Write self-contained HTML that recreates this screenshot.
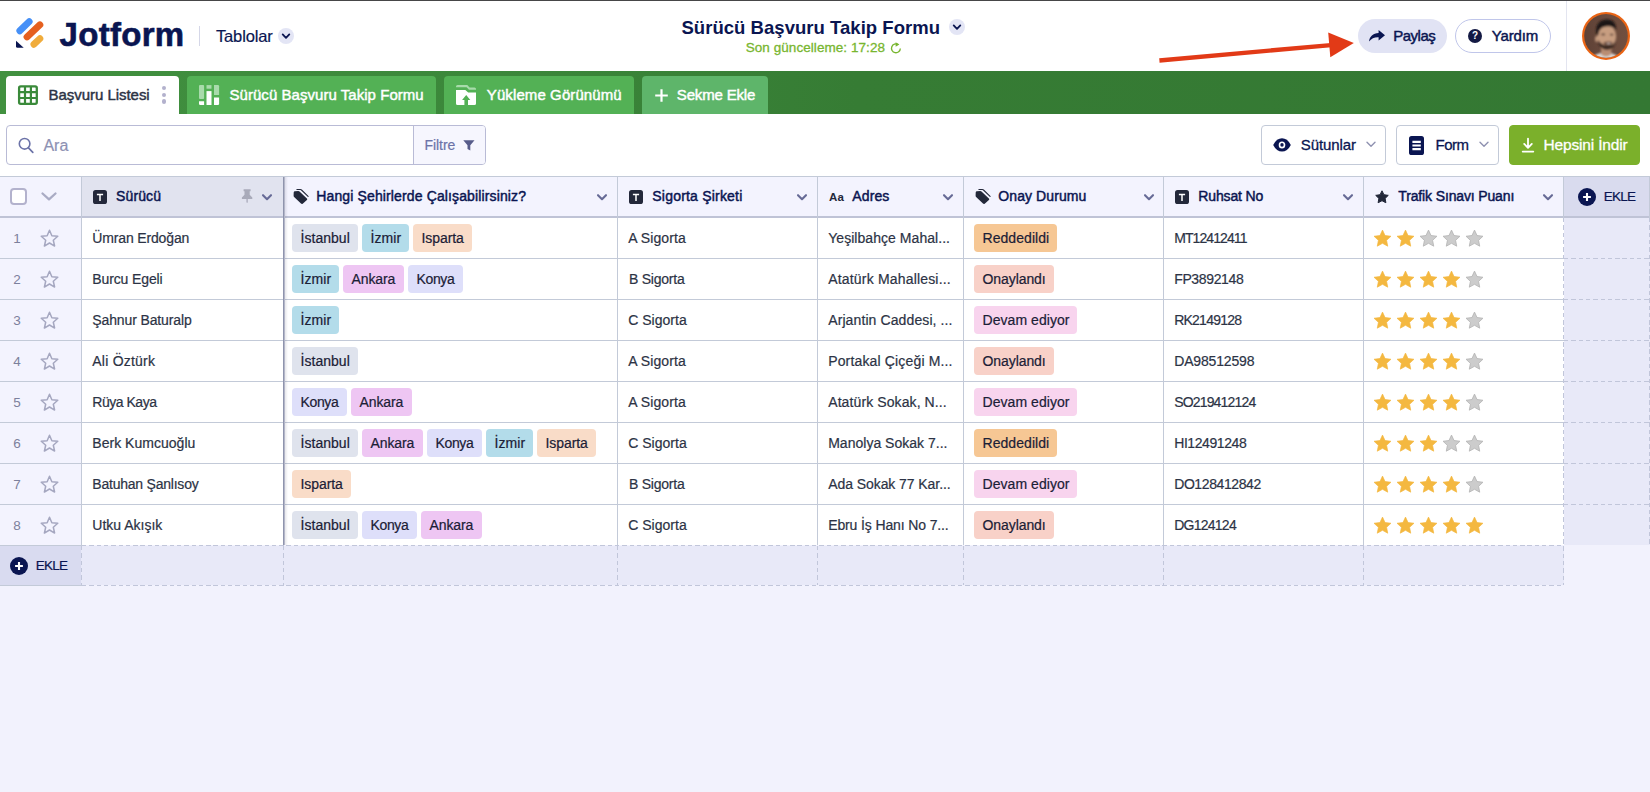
<!DOCTYPE html>
<html lang="tr">
<head>
<meta charset="utf-8">
<title>Sürücü Başvuru Takip Formu</title>
<style>
*{box-sizing:border-box;margin:0;padding:0}
html,body{width:1650px;height:792px;overflow:hidden}
body{font-family:"Liberation Sans",sans-serif;background:#f2f2fd;color:#0a1551;position:relative}
.abs{position:absolute}
svg{position:absolute;overflow:visible}
#topline{left:0;top:0;width:1650px;height:1px;background:#464648}
#header{left:0;top:1px;width:1650px;height:70px;background:#fff}
#greenbar{left:0;top:71px;width:1650px;height:43px;background:linear-gradient(90deg,#429140 0,#3b873a 30%,#367c34 52%,#347833 100%)}
#toolbar{left:0;top:114px;width:1650px;height:62px;background:#fff}
.t{position:absolute;white-space:nowrap;line-height:1}
.tab{position:absolute;top:76px;height:38px;border-radius:4px 4px 0 0;background:#53b155}
.btn{position:absolute;top:125px;height:40px;border:1px solid #c3cad8;border-radius:4px;background:#fff}
.pill{position:absolute;top:19px;height:34px;border-radius:17px}
.circ{position:absolute;width:16px;height:16px;border-radius:8px;background:#e3e5f5}
.hc{position:absolute;top:176px;height:42px;background:#f3f3fe;border-top:1px solid #c3cad8;border-bottom:2px solid #bfc3d6}
.vl{position:absolute;width:1px;background:#c3cad8}
.hl{position:absolute;height:1px;background:#c3cad8;left:0}
.hd{height:1px;background:repeating-linear-gradient(90deg,#c1c6da 0,#c1c6da 4.4px,transparent 4.4px,transparent 7.3px)}
.vd{width:1px;background:repeating-linear-gradient(180deg,#c1c6da 0,#c1c6da 4.4px,transparent 4.4px,transparent 7.3px)}
.chip{position:absolute;height:28px;border-radius:4px}
</style>
</head>
<body>
<div class="abs" id="header"></div>
<div class="abs" id="topline"></div>
<div class="abs" id="greenbar"></div>
<div class="abs" id="toolbar"></div>
<svg style="left:0;top:0" width="200" height="71" viewBox="0 0 200 71">
<line x1="19.8" y1="30.8" x2="29.2" y2="21.6" stroke="#4690f7" stroke-width="6.8" stroke-linecap="round"/>
<line x1="27.0" y1="37.0" x2="39.9" y2="24.8" stroke="#e5601f" stroke-width="6.8" stroke-linecap="round"/>
<line x1="33.9" y1="44.3" x2="39.9" y2="38.6" stroke="#f0ac3c" stroke-width="6.8" stroke-linecap="round"/>
<path d="M16 40.7 L23.7 47.7 L17.5 47.7 Q16 47.7 16 46.2 Z" fill="#0a1551"/>
</svg>
<div class="t" style="left:59.60px;top:17.50px;font-size:33px;font-weight:bold;color:#0a1551;letter-spacing:0.295px;-webkit-text-stroke:0.6px #0a1551;">Jotform</div>
<div class="abs" style="left:199px;top:26px;width:1px;height:20px;background:#d5d7e8"></div>
<div class="t" style="left:216.00px;top:28.25px;font-size:16.5px;font-weight:normal;color:#0a1551;letter-spacing:-0.155px;-webkit-text-stroke:0.2px #0a1551;">Tablolar</div>
<div class="circ" style="left:278px;top:28px"></div><svg style="left:278px;top:28px" width="16" height="16" viewBox="0 0 16 16"><path d="M4.7 6.4 L8 9.8 L11.3 6.4" fill="none" stroke="#0a1551" stroke-width="1.8" stroke-linecap="round" stroke-linejoin="round"/></svg>
<div class="t" style="left:681.50px;top:18.95px;font-size:18.5px;font-weight:bold;color:#0a1551;letter-spacing:0.033px;">Sürücü Başvuru Takip Formu</div>
<div class="circ" style="left:949px;top:19px"></div><svg style="left:949px;top:19px" width="16" height="16" viewBox="0 0 16 16"><path d="M4.7 6.4 L8 9.8 L11.3 6.4" fill="none" stroke="#0a1551" stroke-width="1.8" stroke-linecap="round" stroke-linejoin="round"/></svg>
<div class="t" style="left:745.70px;top:40.75px;font-size:13.5px;font-weight:normal;color:#78b62f;letter-spacing:0.060px;-webkit-text-stroke:0.3px #78b62f;">Son güncelleme: 17:28</div>
<svg style="left:889.5px;top:42.2px" width="12" height="12" viewBox="0 0 12 12"><path d="M8.2 2.6 A4.4 4.4 0 1 0 10.3 6.4" fill="none" stroke="#78b62f" stroke-width="1.35"/><path d="M5.6 0.3 L9.4 2.5 L5.6 4.8 Z" fill="#78b62f"/></svg>
<svg style="left:0;top:0" width="1650" height="71" viewBox="0 0 1650 71"><line x1="1159.4" y1="60.5" x2="1331" y2="45.1" stroke="#e23a17" stroke-width="4.4"/><path d="M1353.8 43 L1328.2 32.5 L1330.3 57.2 Z" fill="#e23a17"/></svg>
<div class="pill" style="left:1358px;width:89px;background:#e1e3f4"></div>
<svg style="left:1368px;top:29px" width="18" height="14" viewBox="0 0 18 14"><path d="M10.6 1 L17 6.2 L10.6 11.4 L10.6 8.3 C6.5 8.1 3.5 9.4 1 12.6 C1.6 7.6 5 4.5 10.6 4.1 Z" fill="#0a1551"/></svg>
<div class="t" style="left:1393.30px;top:28.40px;font-size:15px;font-weight:normal;color:#0a1551;letter-spacing:-0.524px;-webkit-text-stroke:0.45px #0a1551;">Paylaş</div>
<div class="pill" style="left:1455px;width:96px;background:#fff;border:1px solid #c0c6ea"></div>
<div class="abs" style="left:1467.6px;top:28.6px;width:14.6px;height:14.6px;border-radius:8px;background:#141a44"></div>
<div class="t" style="left:1472.10px;top:31.20px;font-size:10px;font-weight:bold;color:#fff;letter-spacing:-0.208px;">?</div>
<div class="t" style="left:1491.80px;top:28.40px;font-size:15px;font-weight:normal;color:#0a1551;letter-spacing:-0.147px;-webkit-text-stroke:0.45px #0a1551;">Yardım</div>
<div class="abs" style="left:1566px;top:1px;width:1px;height:70px;background:#e3e5f0"></div>
<svg style="left:1581px;top:11px" width="50" height="50" viewBox="0 0 50 50">
<defs><clipPath id="av"><circle cx="25" cy="24.9" r="21.8"/></clipPath>
<filter id="bl" x="-20%" y="-20%" width="140%" height="140%"><feGaussianBlur stdDeviation="0.95"/></filter>
<linearGradient id="avbg" x1="0" y1="0" x2="1" y2="0"><stop offset="0" stop-color="#5c4035"/><stop offset="0.5" stop-color="#6a4a3d"/><stop offset="1" stop-color="#73503f"/></linearGradient></defs>
<circle cx="25" cy="24.9" r="24" fill="#ea6414"/>
<g clip-path="url(#av)"><rect x="0" y="0" width="50" height="50" fill="url(#avbg)"/>
<g filter="url(#bl)">
<ellipse cx="24.5" cy="49" rx="14" ry="7.5" fill="#dcd8d5"/>
<path d="M20 34 L20 43.5 Q25 47.5 30 43.5 L31 34 Z" fill="#b98e73"/>
<ellipse cx="15.8" cy="28" rx="1.8" ry="3" fill="#c39a7d"/>
<ellipse cx="25.8" cy="25.6" rx="9.4" ry="11.8" fill="#c79d80"/>
<path d="M15.6 24 C13.5 13 19 8.6 26 8.4 C32 8.4 35.5 12 35 19.5 C33 16.5 30 15 26.5 15.3 C21 15.6 18 18 17.3 24 Z" fill="#1f1715"/>
<path d="M16.8 28.5 C17.5 36 22 39.2 27 38.8 C31.5 38.4 34.2 35 34.8 29 C33 33 31 34.3 27.5 34.3 C23 34.3 19.5 33 16.8 28.5 Z" fill="#3b2922"/>
<path d="M22.5 31.2 Q27.5 30 31.5 31 Q31 34.5 27.3 34.6 Q23.5 34.5 22.5 31.2 Z" fill="#5a3b30"/>
<ellipse cx="27.6" cy="32.4" rx="2.2" ry="0.7" fill="#d9c6bb"/>
<ellipse cx="22.2" cy="23.4" rx="2" ry="0.9" fill="#4a332b"/>
<ellipse cx="30.6" cy="23.6" rx="1.9" ry="0.9" fill="#4a332b"/>
</g></g></svg>
<div class="tab" style="left:6px;width:173px;background:#fff"></div>
<svg style="left:18px;top:85px" width="20" height="20" viewBox="0 0 20 20"><rect x="1.1" y="1.3" width="17.7" height="17.6" rx="1.6" fill="none" stroke="#3a8a3a" stroke-width="2.3"/><path d="M1 7.2 H19 M1 13 H19 M7 1 V19 M12.9 1 V19" stroke="#3a8a3a" stroke-width="2.2" fill="none"/></svg>
<div class="t" style="left:48.50px;top:86.50px;font-size:15px;font-weight:normal;color:#2c3345;letter-spacing:-0.036px;-webkit-text-stroke:0.45px #2c3345;">Başvuru Listesi</div>
<div class="abs" style="left:162px;top:86px;width:4.4px;height:4.4px;border-radius:2.2px;background:#b3b1cd"></div>
<div class="abs" style="left:162px;top:92.6px;width:4.4px;height:4.4px;border-radius:2.2px;background:#b3b1cd"></div>
<div class="abs" style="left:162px;top:99.2px;width:4.4px;height:4.4px;border-radius:2.2px;background:#b3b1cd"></div>
<div class="tab" style="left:187px;width:249px"></div>
<svg style="left:199px;top:85px" width="21" height="20" viewBox="0 0 21 20">
<rect x="0" y="0.1" width="5.1" height="13.9" rx="1" fill="#a8dbab"/><path d="M0 16.2 H5.1 V20 H1.2 Q0 20 0 18.8 Z" fill="#fff"/>
<rect x="7.5" y="0.1" width="5" height="3.6" fill="#a8dbab"/><rect x="7.5" y="6.1" width="5" height="13.9" fill="#fff"/>
<path d="M15 0.1 H18.9 Q20.1 0.1 20.1 1.3 V10 H15 Z" fill="#a8dbab"/><path d="M15 12.5 H20.1 V18.8 Q20.1 20 18.9 20 H15 Z" fill="#fff"/>
</svg>
<div class="t" style="left:229.50px;top:86.50px;font-size:15px;font-weight:normal;color:#fff;letter-spacing:0.042px;-webkit-text-stroke:0.45px #fff;">Sürücü Başvuru Takip Formu</div>
<div class="tab" style="left:444px;width:190px"></div>
<svg style="left:456px;top:85px" width="21" height="20" viewBox="0 0 21 20">
<path d="M0 1.6 Q0 0.1 1.5 0.1 L11.3 0.1 L13.6 2.4 L18.5 2.4 Q20 2.4 20 3.9 L20 4.8 L13 4.8 L10.6 2.3 L0 2.3 Z" fill="#a8dbab"/>
<path d="M0 5 L9.3 5 L12.2 7.6 L20 7.6 L20 18.5 Q20 20 18.5 20 L1.5 20 Q0 20 0 18.5 Z" fill="#fff"/>
<path d="M10.2 10 L14.3 14.9 L12 14.9 L12 20 L8.4 20 L8.4 14.9 L6.1 14.9 Z" fill="#53b155"/>
</svg>
<div class="t" style="left:486.80px;top:86.50px;font-size:15px;font-weight:normal;color:#fff;letter-spacing:0.100px;-webkit-text-stroke:0.45px #fff;">Yükleme Görünümü</div>
<div class="tab" style="left:642px;width:126px;background:#5eb56a"></div>
<svg style="left:654.5px;top:88.5px" width="13" height="13" viewBox="0 0 13 13"><path d="M6.5 0.2 V12.8 M0.2 6.5 H12.8" stroke="#fff" stroke-width="2.2" fill="none"/></svg>
<div class="t" style="left:676.80px;top:86.50px;font-size:15px;font-weight:normal;color:#fff;letter-spacing:-0.170px;-webkit-text-stroke:0.45px #fff;">Sekme Ekle</div>
<div class="btn" style="left:6px;width:480px;border-color:#b9bbd6"></div>
<div class="abs" style="left:413px;top:126px;width:72px;height:38px;background:#f6f6fe;border-left:1px solid #b9bbd6;border-radius:0 3px 3px 0"></div>
<svg style="left:18px;top:137px" width="16" height="17" viewBox="0 0 16 17"><circle cx="6.6" cy="6.8" r="5.3" fill="none" stroke="#6c73a8" stroke-width="1.6"/><path d="M10.5 10.9 L14.8 15.4" stroke="#6c73a8" stroke-width="1.7" stroke-linecap="round"/></svg>
<div class="t" style="left:43.50px;top:137.50px;font-size:16px;font-weight:normal;color:#8d91b3;letter-spacing:-0.049px;-webkit-text-stroke:0.2px #8d91b3;">Ara</div>
<div class="t" style="left:424.50px;top:138.00px;font-size:14px;font-weight:normal;color:#6c73a8;letter-spacing:-0.062px;-webkit-text-stroke:0.2px #6c73a8;">Filtre</div>
<svg style="left:463px;top:140px" width="12" height="11" viewBox="0 0 12 11"><path d="M0.3 0.2 L11.5 0.2 L7.3 5.3 L7.3 10.6 L4.5 9 L4.5 5.3 Z" fill="#575c8a"/></svg>
<div class="btn" style="left:1261px;width:125px"></div>
<svg style="left:1273px;top:138.1px" width="18" height="13.8" viewBox="0 0 18 13" preserveAspectRatio="none"><path d="M0.2 6.5 C2.5 2.3 5.5 0.3 9 0.3 C12.5 0.3 15.5 2.3 17.8 6.5 C15.5 10.7 12.5 12.7 9 12.7 C5.5 12.7 2.5 10.7 0.2 6.5 Z" fill="#0a1551"/><circle cx="9" cy="6.5" r="3.3" fill="#fff"/><circle cx="9" cy="6.5" r="1.7" fill="#0a1551"/></svg>
<div class="t" style="left:1300.80px;top:137.10px;font-size:15px;font-weight:normal;color:#0a1551;letter-spacing:-0.096px;-webkit-text-stroke:0.3px #0a1551;">Sütunlar</div>
<svg style="left:1365.5px;top:141.3px" width="10" height="7" viewBox="0 0 10 7"><path d="M1 1.2 L5 5.2 L9 1.2" fill="none" stroke="#8e91b0" stroke-width="1.4" stroke-linecap="round" stroke-linejoin="round"/></svg>
<div class="btn" style="left:1396px;width:103px"></div>
<svg style="left:1409px;top:135.5px" width="15" height="19" viewBox="0 0 15 19"><rect x="0" y="0" width="15" height="19" rx="2.6" fill="#0a1551"/><path d="M3.4 5.8 H11.8 M3.4 9.5 H11.8 M3.4 13.2 H11.8" stroke="#fff" stroke-width="2.2"/></svg>
<div class="t" style="left:1435.50px;top:137.10px;font-size:15px;font-weight:normal;color:#0a1551;letter-spacing:-0.498px;-webkit-text-stroke:0.3px #0a1551;">Form</div>
<svg style="left:1479px;top:141.3px" width="10" height="7" viewBox="0 0 10 7"><path d="M1 1.2 L5 5.2 L9 1.2" fill="none" stroke="#8e91b0" stroke-width="1.4" stroke-linecap="round" stroke-linejoin="round"/></svg>
<div class="btn" style="left:1509px;width:131px;background:#7bb02b;border-color:#7bb02b"></div>
<svg style="left:1521.9px;top:138px" width="12" height="15" viewBox="0 0 12 15"><path d="M6 0.6 V9.4 M2.2 5.9 L6 9.8 L9.8 5.9 M0.7 13.6 H11.3" stroke="#fff" stroke-width="1.8" fill="none" stroke-linecap="round" stroke-linejoin="round"/></svg>
<div class="t" style="left:1543.50px;top:136.85px;font-size:15.5px;font-weight:normal;color:#fff;letter-spacing:-0.162px;-webkit-text-stroke:0.3px #fff;">Hepsini İndir</div>
<div class="hc" style="left:0;width:1650px"></div>
<div class="abs" style="left:82px;top:177px;width:201px;height:39px;background:#e1e3ef"></div>
<div class="abs" style="left:1564px;top:177px;width:86px;height:39px;background:#d9dbee"></div>
<div class="abs" style="left:0;top:218px;width:81px;height:327px;background:#f3f3fe"></div>
<div class="abs" style="left:82px;top:218px;width:1482px;height:327px;background:#fff"></div>
<div class="abs" style="left:1564px;top:218px;width:86px;height:327px;background:#e8e9f8"></div>
<div class="abs" style="left:0;top:546px;width:81px;height:39px;background:#d9dbf0"></div>
<div class="abs" style="left:81px;top:546px;width:1483px;height:39px;background:#e8e9f8"></div>
<div class="hl" style="top:258px;width:1564px"></div>
<div class="abs hd" style="left:1564px;top:258px;width:86px"></div>
<div class="hl" style="top:299px;width:1564px"></div>
<div class="abs hd" style="left:1564px;top:299px;width:86px"></div>
<div class="hl" style="top:340px;width:1564px"></div>
<div class="abs hd" style="left:1564px;top:340px;width:86px"></div>
<div class="hl" style="top:381px;width:1564px"></div>
<div class="abs hd" style="left:1564px;top:381px;width:86px"></div>
<div class="hl" style="top:422px;width:1564px"></div>
<div class="abs hd" style="left:1564px;top:422px;width:86px"></div>
<div class="hl" style="top:463px;width:1564px"></div>
<div class="abs hd" style="left:1564px;top:463px;width:86px"></div>
<div class="hl" style="top:504px;width:1564px"></div>
<div class="abs hd" style="left:1564px;top:504px;width:86px"></div>
<div class="abs hd" style="left:82px;top:545px;width:1482px"></div>
<div class="hl" style="top:545px;width:82px"></div>
<div class="abs hd" style="left:82px;top:585px;width:1482px"></div>
<div class="hl" style="top:585px;width:82px"></div>
<div class="vl" style="left:81px;top:177px;height:368px"></div>
<div class="abs vd" style="left:81px;top:546px;height:39px"></div>
<div class="vl" style="left:617px;top:177px;height:368px"></div>
<div class="abs vd" style="left:617px;top:546px;height:39px"></div>
<div class="vl" style="left:817px;top:177px;height:368px"></div>
<div class="abs vd" style="left:817px;top:546px;height:39px"></div>
<div class="vl" style="left:963px;top:177px;height:368px"></div>
<div class="abs vd" style="left:963px;top:546px;height:39px"></div>
<div class="vl" style="left:1163px;top:177px;height:368px"></div>
<div class="abs vd" style="left:1163px;top:546px;height:39px"></div>
<div class="vl" style="left:1363px;top:177px;height:368px"></div>
<div class="abs vd" style="left:1363px;top:546px;height:39px"></div>
<div class="abs" style="left:283px;top:177px;width:1px;height:368px;background:#8f94ad"></div>
<div class="abs" style="left:284px;top:177px;width:1px;height:368px;background:#b4b7c9"></div>
<div class="abs" style="left:285px;top:177px;width:3px;height:368px;background:linear-gradient(90deg,rgba(20,20,60,0.10),rgba(20,20,60,0))"></div>
<div class="abs vd" style="left:283px;top:546px;height:39px"></div>
<div class="vl" style="left:1563px;top:177px;height:41px"></div>
<div class="vl" style="left:1649px;top:177px;height:41px"></div>
<div class="abs vd" style="left:1649px;top:218px;height:327px"></div>
<div class="abs vd" style="left:1563px;top:218px;height:367px"></div>
<div class="abs" style="left:10px;top:188px;width:17px;height:17px;border:2px solid #b3b2cd;border-radius:4px;background:#fff"></div>
<svg style="left:41px;top:192px" width="16" height="9" viewBox="0 0 16 9"><path d="M1.5 1.5 L8 7.3 L14.5 1.5" fill="none" stroke="#a9abc4" stroke-width="2.3" stroke-linecap="round" stroke-linejoin="round"/></svg>
<svg style="left:93px;top:190px" width="14" height="14" viewBox="0 0 14 14"><rect width="14" height="14" rx="2.6" fill="#23283a"/><path d="M3.9 3.7 H10.1 V5.2 H7.75 V11 H6.25 V5.2 H3.9 Z" fill="#fff"/></svg>
<div class="t" style="left:116.00px;top:189.10px;font-size:14px;font-weight:normal;color:#0a1551;letter-spacing:0.128px;-webkit-text-stroke:0.45px #0a1551;">Sürücü</div>
<svg style="left:241px;top:189px" width="12" height="14" viewBox="0 0 12 14"><path d="M2.6 0.2 H9.6 V2.2 H8.7 V5.8 L11.3 8.4 V9.9 H6.75 V13.3 L6.1 14 L5.45 13.3 V9.9 H0.9 V8.4 L3.5 5.8 V2.2 H2.6 Z" fill="#a9abba"/></svg>
<svg style="left:262px;top:193.7px" width="10" height="7" viewBox="0 0 10 7"><path d="M1 1.2 L5 5.2 L9 1.2" fill="none" stroke="#666a96" stroke-width="2.1" stroke-linecap="round" stroke-linejoin="round"/></svg>
<svg style="left:292.7px;top:189px" width="16" height="16" viewBox="0 0 16 16"><path d="M1.9 2.3 L5.3 2 Q6 2 6.5 2.5 L13.9 9.4 Q14.7 10.2 13.9 11 L9.7 14.7 Q8.8 15.4 8 14.6 L1.1 8 Q0.6 7.5 0.6 6.8 L0.7 3.5 Q0.8 2.4 1.9 2.3 Z" fill="#23283a"/><path d="M3.9 0.55 L7.4 0.55 Q8 0.55 8.5 1 L15.1 7.3" fill="none" stroke="#23283a" stroke-width="1.1" stroke-linecap="round"/></svg>
<div class="t" style="left:316.30px;top:189.10px;font-size:14px;font-weight:normal;color:#0a1551;letter-spacing:0.129px;-webkit-text-stroke:0.45px #0a1551;">Hangi Şehirlerde Çalışabilirsiniz?</div>
<svg style="left:597px;top:193.7px" width="10" height="7" viewBox="0 0 10 7"><path d="M1 1.2 L5 5.2 L9 1.2" fill="none" stroke="#666a96" stroke-width="2.1" stroke-linecap="round" stroke-linejoin="round"/></svg>
<svg style="left:629px;top:190px" width="14" height="14" viewBox="0 0 14 14"><rect width="14" height="14" rx="2.6" fill="#23283a"/><path d="M3.9 3.7 H10.1 V5.2 H7.75 V11 H6.25 V5.2 H3.9 Z" fill="#fff"/></svg>
<div class="t" style="left:652.30px;top:189.10px;font-size:14px;font-weight:normal;color:#0a1551;letter-spacing:0.204px;-webkit-text-stroke:0.45px #0a1551;">Sigorta Şirketi</div>
<svg style="left:797px;top:193.7px" width="10" height="7" viewBox="0 0 10 7"><path d="M1 1.2 L5 5.2 L9 1.2" fill="none" stroke="#666a96" stroke-width="2.1" stroke-linecap="round" stroke-linejoin="round"/></svg>
<div class="t" style="left:829.10px;top:191.65px;font-size:11.5px;font-weight:bold;color:#23283a;letter-spacing:0.100px;">Aa</div>
<div class="t" style="left:852.30px;top:189.10px;font-size:14px;font-weight:normal;color:#0a1551;letter-spacing:0.107px;-webkit-text-stroke:0.45px #0a1551;">Adres</div>
<svg style="left:943px;top:193.7px" width="10" height="7" viewBox="0 0 10 7"><path d="M1 1.2 L5 5.2 L9 1.2" fill="none" stroke="#666a96" stroke-width="2.1" stroke-linecap="round" stroke-linejoin="round"/></svg>
<svg style="left:974.7px;top:189px" width="16" height="16" viewBox="0 0 16 16"><path d="M1.9 2.3 L5.3 2 Q6 2 6.5 2.5 L13.9 9.4 Q14.7 10.2 13.9 11 L9.7 14.7 Q8.8 15.4 8 14.6 L1.1 8 Q0.6 7.5 0.6 6.8 L0.7 3.5 Q0.8 2.4 1.9 2.3 Z" fill="#23283a"/><path d="M3.9 0.55 L7.4 0.55 Q8 0.55 8.5 1 L15.1 7.3" fill="none" stroke="#23283a" stroke-width="1.1" stroke-linecap="round"/></svg>
<div class="t" style="left:998.30px;top:189.10px;font-size:14px;font-weight:normal;color:#0a1551;letter-spacing:0.086px;-webkit-text-stroke:0.45px #0a1551;">Onay Durumu</div>
<svg style="left:1143.5px;top:193.7px" width="10" height="7" viewBox="0 0 10 7"><path d="M1 1.2 L5 5.2 L9 1.2" fill="none" stroke="#666a96" stroke-width="2.1" stroke-linecap="round" stroke-linejoin="round"/></svg>
<svg style="left:1175px;top:190px" width="14" height="14" viewBox="0 0 14 14"><rect width="14" height="14" rx="2.6" fill="#23283a"/><path d="M3.9 3.7 H10.1 V5.2 H7.75 V11 H6.25 V5.2 H3.9 Z" fill="#fff"/></svg>
<div class="t" style="left:1198.30px;top:189.10px;font-size:14px;font-weight:normal;color:#0a1551;letter-spacing:-0.143px;-webkit-text-stroke:0.45px #0a1551;">Ruhsat No</div>
<svg style="left:1343px;top:193.7px" width="10" height="7" viewBox="0 0 10 7"><path d="M1 1.2 L5 5.2 L9 1.2" fill="none" stroke="#666a96" stroke-width="2.1" stroke-linecap="round" stroke-linejoin="round"/></svg>
<svg style="left:1375px;top:189.5px" width="14" height="14" viewBox="0 0 14 14"><path d="M7.00 0.80 L8.94 4.73 L13.28 5.36 L10.14 8.42 L10.88 12.74 L7.00 10.70 L3.12 12.74 L3.86 8.42 L0.72 5.36 L5.06 4.73 Z" fill="#23283a" stroke="#23283a" stroke-width="1" stroke-linejoin="round"/></svg>
<div class="t" style="left:1398.30px;top:189.10px;font-size:14px;font-weight:normal;color:#0a1551;letter-spacing:-0.141px;-webkit-text-stroke:0.45px #0a1551;">Trafik Sınavı Puanı</div>
<svg style="left:1543px;top:193.7px" width="10" height="7" viewBox="0 0 10 7"><path d="M1 1.2 L5 5.2 L9 1.2" fill="none" stroke="#666a96" stroke-width="2.1" stroke-linecap="round" stroke-linejoin="round"/></svg>
<svg style="left:1577.7px;top:187.7px" width="18" height="18" viewBox="0 0 18 18"><circle cx="9" cy="9" r="9" fill="#0a1551"/><path d="M9 5.1 V12.9 M5.1 9 H12.9" stroke="#fff" stroke-width="2.1"/></svg>
<div class="t" style="left:1603.80px;top:190.05px;font-size:13.5px;font-weight:normal;color:#0a1551;letter-spacing:-0.774px;-webkit-text-stroke:0.2px #0a1551;">EKLE</div>
<svg style="left:10px;top:556.8px" width="18" height="18" viewBox="0 0 18 18"><circle cx="9" cy="9" r="9" fill="#0a1551"/><path d="M9 5.1 V12.9 M5.1 9 H12.9" stroke="#fff" stroke-width="2.1"/></svg>
<div class="t" style="left:35.80px;top:558.75px;font-size:13.5px;font-weight:normal;color:#0a1551;letter-spacing:-0.774px;-webkit-text-stroke:0.2px #0a1551;">EKLE</div>
<div class="t" style="left:7px;width:20px;text-align:center;top:231.55px;font-size:13.5px;color:#7c809c">1</div>
<svg style="left:39.9px;top:228.8px" width="19" height="19" viewBox="0 0 19 19"><path d="M9.50 1.30 L11.85 6.76 L17.77 7.31 L13.30 11.24 L14.61 17.04 L9.50 14.00 L4.39 17.04 L5.70 11.24 L1.23 7.31 L7.15 6.76 Z" fill="none" stroke="#a5a7c0" stroke-width="1.5" stroke-linejoin="round"/></svg>
<div class="t" style="left:92.30px;top:231.30px;font-size:14px;font-weight:normal;color:#2c3345;letter-spacing:-0.152px;-webkit-text-stroke:0.2px #2c3345;">Ümran Erdoğan</div>
<div class="chip" style="left:292.25px;top:224px;width:65.75px;background:#dfe3ed"></div>
<div class="t" style="left:300.55px;top:231.30px;font-size:14px;font-weight:normal;color:#1b2036;letter-spacing:0.024px;-webkit-text-stroke:0.2px #1b2036;">İstanbul</div>
<div class="chip" style="left:362.25px;top:224px;width:46.75px;background:#b3dcea"></div>
<div class="t" style="left:370.55px;top:231.30px;font-size:14px;font-weight:normal;color:#1b2036;letter-spacing:0.044px;-webkit-text-stroke:0.2px #1b2036;">İzmir</div>
<div class="chip" style="left:413.25px;top:224px;width:58.75px;background:#f9dcc8"></div>
<div class="t" style="left:421.55px;top:231.30px;font-size:14px;font-weight:normal;color:#1b2036;letter-spacing:-0.083px;-webkit-text-stroke:0.2px #1b2036;">Isparta</div>
<div class="t" style="left:628.20px;top:231.30px;font-size:14px;font-weight:normal;color:#2c3345;letter-spacing:0.086px;-webkit-text-stroke:0.2px #2c3345;">A Sigorta</div>
<div class="t" style="left:828.20px;top:231.30px;font-size:14px;font-weight:normal;color:#2c3345;letter-spacing:0.050px;-webkit-text-stroke:0.2px #2c3345;">Yeşilbahçe Mahal...</div>
<div class="chip" style="left:974px;top:224px;width:83px;background:#f6c794"></div>
<div class="t" style="left:982.50px;top:231.30px;font-size:14px;font-weight:normal;color:#1b2036;letter-spacing:0.060px;-webkit-text-stroke:0.2px #1b2036;">Reddedildi</div>
<div class="t" style="left:1174.20px;top:231.30px;font-size:14px;font-weight:normal;color:#2c3345;letter-spacing:-0.907px;-webkit-text-stroke:0.2px #2c3345;">MT12412411</div>
<svg style="left:1373.2px;top:229.3px" width="19" height="19" viewBox="0 0 19 19"><path d="M9.50 1.10 L12.03 6.52 L17.96 7.25 L13.59 11.33 L14.73 17.20 L9.50 14.30 L4.27 17.20 L5.41 11.33 L1.04 7.25 L6.97 6.52 Z" fill="#f4b840" stroke="#f4b840" stroke-width="0.7" stroke-linejoin="round"/></svg>
<svg style="left:1396.2px;top:229.3px" width="19" height="19" viewBox="0 0 19 19"><path d="M9.50 1.10 L12.03 6.52 L17.96 7.25 L13.59 11.33 L14.73 17.20 L9.50 14.30 L4.27 17.20 L5.41 11.33 L1.04 7.25 L6.97 6.52 Z" fill="#f4b840" stroke="#f4b840" stroke-width="0.7" stroke-linejoin="round"/></svg>
<svg style="left:1419.2px;top:229.3px" width="19" height="19" viewBox="0 0 19 19"><path d="M9.50 1.10 L12.03 6.52 L17.96 7.25 L13.59 11.33 L14.73 17.20 L9.50 14.30 L4.27 17.20 L5.41 11.33 L1.04 7.25 L6.97 6.52 Z" fill="#cccccc" stroke="#b2b2b2" stroke-width="0.8" stroke-linejoin="round"/></svg>
<svg style="left:1442.2px;top:229.3px" width="19" height="19" viewBox="0 0 19 19"><path d="M9.50 1.10 L12.03 6.52 L17.96 7.25 L13.59 11.33 L14.73 17.20 L9.50 14.30 L4.27 17.20 L5.41 11.33 L1.04 7.25 L6.97 6.52 Z" fill="#cccccc" stroke="#b2b2b2" stroke-width="0.8" stroke-linejoin="round"/></svg>
<svg style="left:1465.2px;top:229.3px" width="19" height="19" viewBox="0 0 19 19"><path d="M9.50 1.10 L12.03 6.52 L17.96 7.25 L13.59 11.33 L14.73 17.20 L9.50 14.30 L4.27 17.20 L5.41 11.33 L1.04 7.25 L6.97 6.52 Z" fill="#cccccc" stroke="#b2b2b2" stroke-width="0.8" stroke-linejoin="round"/></svg>
<div class="t" style="left:7px;width:20px;text-align:center;top:272.55px;font-size:13.5px;color:#7c809c">2</div>
<svg style="left:39.9px;top:269.8px" width="19" height="19" viewBox="0 0 19 19"><path d="M9.50 1.30 L11.85 6.76 L17.77 7.31 L13.30 11.24 L14.61 17.04 L9.50 14.00 L4.39 17.04 L5.70 11.24 L1.23 7.31 L7.15 6.76 Z" fill="none" stroke="#a5a7c0" stroke-width="1.5" stroke-linejoin="round"/></svg>
<div class="t" style="left:92.30px;top:272.30px;font-size:14px;font-weight:normal;color:#2c3345;letter-spacing:-0.119px;-webkit-text-stroke:0.2px #2c3345;">Burcu Egeli</div>
<div class="chip" style="left:292.25px;top:265px;width:46.75px;background:#b3dcea"></div>
<div class="t" style="left:300.55px;top:272.30px;font-size:14px;font-weight:normal;color:#1b2036;letter-spacing:0.044px;-webkit-text-stroke:0.2px #1b2036;">İzmir</div>
<div class="chip" style="left:343.25px;top:265px;width:60.75px;background:#eec6f3"></div>
<div class="t" style="left:351.55px;top:272.30px;font-size:14px;font-weight:normal;color:#1b2036;letter-spacing:-0.132px;-webkit-text-stroke:0.2px #1b2036;">Ankara</div>
<div class="chip" style="left:408.25px;top:265px;width:54.75px;background:#dedffa"></div>
<div class="t" style="left:416.55px;top:272.30px;font-size:14px;font-weight:normal;color:#1b2036;letter-spacing:-0.374px;-webkit-text-stroke:0.2px #1b2036;">Konya</div>
<div class="t" style="left:629.00px;top:272.30px;font-size:14px;font-weight:normal;color:#2c3345;letter-spacing:-0.236px;-webkit-text-stroke:0.2px #2c3345;">B Sigorta</div>
<div class="t" style="left:828.20px;top:272.30px;font-size:14px;font-weight:normal;color:#2c3345;letter-spacing:0.182px;-webkit-text-stroke:0.2px #2c3345;">Atatürk Mahallesi...</div>
<div class="chip" style="left:974px;top:265px;width:80px;background:#f8d1c8"></div>
<div class="t" style="left:982.50px;top:272.30px;font-size:14px;font-weight:normal;color:#1b2036;letter-spacing:-0.077px;-webkit-text-stroke:0.2px #1b2036;">Onaylandı</div>
<div class="t" style="left:1174.20px;top:272.30px;font-size:14px;font-weight:normal;color:#2c3345;letter-spacing:-0.361px;-webkit-text-stroke:0.2px #2c3345;">FP3892148</div>
<svg style="left:1373.2px;top:270.3px" width="19" height="19" viewBox="0 0 19 19"><path d="M9.50 1.10 L12.03 6.52 L17.96 7.25 L13.59 11.33 L14.73 17.20 L9.50 14.30 L4.27 17.20 L5.41 11.33 L1.04 7.25 L6.97 6.52 Z" fill="#f4b840" stroke="#f4b840" stroke-width="0.7" stroke-linejoin="round"/></svg>
<svg style="left:1396.2px;top:270.3px" width="19" height="19" viewBox="0 0 19 19"><path d="M9.50 1.10 L12.03 6.52 L17.96 7.25 L13.59 11.33 L14.73 17.20 L9.50 14.30 L4.27 17.20 L5.41 11.33 L1.04 7.25 L6.97 6.52 Z" fill="#f4b840" stroke="#f4b840" stroke-width="0.7" stroke-linejoin="round"/></svg>
<svg style="left:1419.2px;top:270.3px" width="19" height="19" viewBox="0 0 19 19"><path d="M9.50 1.10 L12.03 6.52 L17.96 7.25 L13.59 11.33 L14.73 17.20 L9.50 14.30 L4.27 17.20 L5.41 11.33 L1.04 7.25 L6.97 6.52 Z" fill="#f4b840" stroke="#f4b840" stroke-width="0.7" stroke-linejoin="round"/></svg>
<svg style="left:1442.2px;top:270.3px" width="19" height="19" viewBox="0 0 19 19"><path d="M9.50 1.10 L12.03 6.52 L17.96 7.25 L13.59 11.33 L14.73 17.20 L9.50 14.30 L4.27 17.20 L5.41 11.33 L1.04 7.25 L6.97 6.52 Z" fill="#f4b840" stroke="#f4b840" stroke-width="0.7" stroke-linejoin="round"/></svg>
<svg style="left:1465.2px;top:270.3px" width="19" height="19" viewBox="0 0 19 19"><path d="M9.50 1.10 L12.03 6.52 L17.96 7.25 L13.59 11.33 L14.73 17.20 L9.50 14.30 L4.27 17.20 L5.41 11.33 L1.04 7.25 L6.97 6.52 Z" fill="#cccccc" stroke="#b2b2b2" stroke-width="0.8" stroke-linejoin="round"/></svg>
<div class="t" style="left:7px;width:20px;text-align:center;top:313.55px;font-size:13.5px;color:#7c809c">3</div>
<svg style="left:39.9px;top:310.8px" width="19" height="19" viewBox="0 0 19 19"><path d="M9.50 1.30 L11.85 6.76 L17.77 7.31 L13.30 11.24 L14.61 17.04 L9.50 14.00 L4.39 17.04 L5.70 11.24 L1.23 7.31 L7.15 6.76 Z" fill="none" stroke="#a5a7c0" stroke-width="1.5" stroke-linejoin="round"/></svg>
<div class="t" style="left:92.30px;top:313.30px;font-size:14px;font-weight:normal;color:#2c3345;letter-spacing:-0.127px;-webkit-text-stroke:0.2px #2c3345;">Şahnur Baturalp</div>
<div class="chip" style="left:292.25px;top:306px;width:46.75px;background:#b3dcea"></div>
<div class="t" style="left:300.55px;top:313.30px;font-size:14px;font-weight:normal;color:#1b2036;letter-spacing:0.044px;-webkit-text-stroke:0.2px #1b2036;">İzmir</div>
<div class="t" style="left:628.20px;top:313.30px;font-size:14px;font-weight:normal;color:#2c3345;letter-spacing:0.018px;-webkit-text-stroke:0.2px #2c3345;">C Sigorta</div>
<div class="t" style="left:828.20px;top:313.30px;font-size:14px;font-weight:normal;color:#2c3345;letter-spacing:0.107px;-webkit-text-stroke:0.2px #2c3345;">Arjantin Caddesi, ...</div>
<div class="chip" style="left:974px;top:306px;width:103px;background:#f8d4ee"></div>
<div class="t" style="left:982.50px;top:313.30px;font-size:14px;font-weight:normal;color:#1b2036;letter-spacing:0.058px;-webkit-text-stroke:0.2px #1b2036;">Devam ediyor</div>
<div class="t" style="left:1174.20px;top:313.30px;font-size:14px;font-weight:normal;color:#2c3345;letter-spacing:-0.769px;-webkit-text-stroke:0.2px #2c3345;">RK2149128</div>
<svg style="left:1373.2px;top:311.3px" width="19" height="19" viewBox="0 0 19 19"><path d="M9.50 1.10 L12.03 6.52 L17.96 7.25 L13.59 11.33 L14.73 17.20 L9.50 14.30 L4.27 17.20 L5.41 11.33 L1.04 7.25 L6.97 6.52 Z" fill="#f4b840" stroke="#f4b840" stroke-width="0.7" stroke-linejoin="round"/></svg>
<svg style="left:1396.2px;top:311.3px" width="19" height="19" viewBox="0 0 19 19"><path d="M9.50 1.10 L12.03 6.52 L17.96 7.25 L13.59 11.33 L14.73 17.20 L9.50 14.30 L4.27 17.20 L5.41 11.33 L1.04 7.25 L6.97 6.52 Z" fill="#f4b840" stroke="#f4b840" stroke-width="0.7" stroke-linejoin="round"/></svg>
<svg style="left:1419.2px;top:311.3px" width="19" height="19" viewBox="0 0 19 19"><path d="M9.50 1.10 L12.03 6.52 L17.96 7.25 L13.59 11.33 L14.73 17.20 L9.50 14.30 L4.27 17.20 L5.41 11.33 L1.04 7.25 L6.97 6.52 Z" fill="#f4b840" stroke="#f4b840" stroke-width="0.7" stroke-linejoin="round"/></svg>
<svg style="left:1442.2px;top:311.3px" width="19" height="19" viewBox="0 0 19 19"><path d="M9.50 1.10 L12.03 6.52 L17.96 7.25 L13.59 11.33 L14.73 17.20 L9.50 14.30 L4.27 17.20 L5.41 11.33 L1.04 7.25 L6.97 6.52 Z" fill="#f4b840" stroke="#f4b840" stroke-width="0.7" stroke-linejoin="round"/></svg>
<svg style="left:1465.2px;top:311.3px" width="19" height="19" viewBox="0 0 19 19"><path d="M9.50 1.10 L12.03 6.52 L17.96 7.25 L13.59 11.33 L14.73 17.20 L9.50 14.30 L4.27 17.20 L5.41 11.33 L1.04 7.25 L6.97 6.52 Z" fill="#cccccc" stroke="#b2b2b2" stroke-width="0.8" stroke-linejoin="round"/></svg>
<div class="t" style="left:7px;width:20px;text-align:center;top:354.55px;font-size:13.5px;color:#7c809c">4</div>
<svg style="left:39.9px;top:351.8px" width="19" height="19" viewBox="0 0 19 19"><path d="M9.50 1.30 L11.85 6.76 L17.77 7.31 L13.30 11.24 L14.61 17.04 L9.50 14.00 L4.39 17.04 L5.70 11.24 L1.23 7.31 L7.15 6.76 Z" fill="none" stroke="#a5a7c0" stroke-width="1.5" stroke-linejoin="round"/></svg>
<div class="t" style="left:92.30px;top:354.30px;font-size:14px;font-weight:normal;color:#2c3345;letter-spacing:0.225px;-webkit-text-stroke:0.2px #2c3345;">Ali Öztürk</div>
<div class="chip" style="left:292.25px;top:347px;width:65.75px;background:#dfe3ed"></div>
<div class="t" style="left:300.55px;top:354.30px;font-size:14px;font-weight:normal;color:#1b2036;letter-spacing:0.024px;-webkit-text-stroke:0.2px #1b2036;">İstanbul</div>
<div class="t" style="left:628.20px;top:354.30px;font-size:14px;font-weight:normal;color:#2c3345;letter-spacing:0.086px;-webkit-text-stroke:0.2px #2c3345;">A Sigorta</div>
<div class="t" style="left:828.20px;top:354.30px;font-size:14px;font-weight:normal;color:#2c3345;letter-spacing:0.154px;-webkit-text-stroke:0.2px #2c3345;">Portakal Çiçeği M...</div>
<div class="chip" style="left:974px;top:347px;width:80px;background:#f8d1c8"></div>
<div class="t" style="left:982.50px;top:354.30px;font-size:14px;font-weight:normal;color:#1b2036;letter-spacing:-0.077px;-webkit-text-stroke:0.2px #1b2036;">Onaylandı</div>
<div class="t" style="left:1174.20px;top:354.30px;font-size:14px;font-weight:normal;color:#2c3345;letter-spacing:-0.160px;-webkit-text-stroke:0.2px #2c3345;">DA98512598</div>
<svg style="left:1373.2px;top:352.3px" width="19" height="19" viewBox="0 0 19 19"><path d="M9.50 1.10 L12.03 6.52 L17.96 7.25 L13.59 11.33 L14.73 17.20 L9.50 14.30 L4.27 17.20 L5.41 11.33 L1.04 7.25 L6.97 6.52 Z" fill="#f4b840" stroke="#f4b840" stroke-width="0.7" stroke-linejoin="round"/></svg>
<svg style="left:1396.2px;top:352.3px" width="19" height="19" viewBox="0 0 19 19"><path d="M9.50 1.10 L12.03 6.52 L17.96 7.25 L13.59 11.33 L14.73 17.20 L9.50 14.30 L4.27 17.20 L5.41 11.33 L1.04 7.25 L6.97 6.52 Z" fill="#f4b840" stroke="#f4b840" stroke-width="0.7" stroke-linejoin="round"/></svg>
<svg style="left:1419.2px;top:352.3px" width="19" height="19" viewBox="0 0 19 19"><path d="M9.50 1.10 L12.03 6.52 L17.96 7.25 L13.59 11.33 L14.73 17.20 L9.50 14.30 L4.27 17.20 L5.41 11.33 L1.04 7.25 L6.97 6.52 Z" fill="#f4b840" stroke="#f4b840" stroke-width="0.7" stroke-linejoin="round"/></svg>
<svg style="left:1442.2px;top:352.3px" width="19" height="19" viewBox="0 0 19 19"><path d="M9.50 1.10 L12.03 6.52 L17.96 7.25 L13.59 11.33 L14.73 17.20 L9.50 14.30 L4.27 17.20 L5.41 11.33 L1.04 7.25 L6.97 6.52 Z" fill="#f4b840" stroke="#f4b840" stroke-width="0.7" stroke-linejoin="round"/></svg>
<svg style="left:1465.2px;top:352.3px" width="19" height="19" viewBox="0 0 19 19"><path d="M9.50 1.10 L12.03 6.52 L17.96 7.25 L13.59 11.33 L14.73 17.20 L9.50 14.30 L4.27 17.20 L5.41 11.33 L1.04 7.25 L6.97 6.52 Z" fill="#cccccc" stroke="#b2b2b2" stroke-width="0.8" stroke-linejoin="round"/></svg>
<div class="t" style="left:7px;width:20px;text-align:center;top:395.55px;font-size:13.5px;color:#7c809c">5</div>
<svg style="left:39.9px;top:392.8px" width="19" height="19" viewBox="0 0 19 19"><path d="M9.50 1.30 L11.85 6.76 L17.77 7.31 L13.30 11.24 L14.61 17.04 L9.50 14.00 L4.39 17.04 L5.70 11.24 L1.23 7.31 L7.15 6.76 Z" fill="none" stroke="#a5a7c0" stroke-width="1.5" stroke-linejoin="round"/></svg>
<div class="t" style="left:92.30px;top:395.30px;font-size:14px;font-weight:normal;color:#2c3345;letter-spacing:-0.473px;-webkit-text-stroke:0.2px #2c3345;">Rüya Kaya</div>
<div class="chip" style="left:292.25px;top:388px;width:54.75px;background:#dedffa"></div>
<div class="t" style="left:300.55px;top:395.30px;font-size:14px;font-weight:normal;color:#1b2036;letter-spacing:-0.374px;-webkit-text-stroke:0.2px #1b2036;">Konya</div>
<div class="chip" style="left:351.25px;top:388px;width:60.75px;background:#eec6f3"></div>
<div class="t" style="left:359.55px;top:395.30px;font-size:14px;font-weight:normal;color:#1b2036;letter-spacing:-0.132px;-webkit-text-stroke:0.2px #1b2036;">Ankara</div>
<div class="t" style="left:628.20px;top:395.30px;font-size:14px;font-weight:normal;color:#2c3345;letter-spacing:0.086px;-webkit-text-stroke:0.2px #2c3345;">A Sigorta</div>
<div class="t" style="left:828.20px;top:395.30px;font-size:14px;font-weight:normal;color:#2c3345;letter-spacing:0.100px;-webkit-text-stroke:0.2px #2c3345;">Atatürk Sokak, N...</div>
<div class="chip" style="left:974px;top:388px;width:103px;background:#f8d4ee"></div>
<div class="t" style="left:982.50px;top:395.30px;font-size:14px;font-weight:normal;color:#1b2036;letter-spacing:0.058px;-webkit-text-stroke:0.2px #1b2036;">Devam ediyor</div>
<div class="t" style="left:1174.20px;top:395.30px;font-size:14px;font-weight:normal;color:#2c3345;letter-spacing:-0.830px;-webkit-text-stroke:0.2px #2c3345;">SO219412124</div>
<svg style="left:1373.2px;top:393.3px" width="19" height="19" viewBox="0 0 19 19"><path d="M9.50 1.10 L12.03 6.52 L17.96 7.25 L13.59 11.33 L14.73 17.20 L9.50 14.30 L4.27 17.20 L5.41 11.33 L1.04 7.25 L6.97 6.52 Z" fill="#f4b840" stroke="#f4b840" stroke-width="0.7" stroke-linejoin="round"/></svg>
<svg style="left:1396.2px;top:393.3px" width="19" height="19" viewBox="0 0 19 19"><path d="M9.50 1.10 L12.03 6.52 L17.96 7.25 L13.59 11.33 L14.73 17.20 L9.50 14.30 L4.27 17.20 L5.41 11.33 L1.04 7.25 L6.97 6.52 Z" fill="#f4b840" stroke="#f4b840" stroke-width="0.7" stroke-linejoin="round"/></svg>
<svg style="left:1419.2px;top:393.3px" width="19" height="19" viewBox="0 0 19 19"><path d="M9.50 1.10 L12.03 6.52 L17.96 7.25 L13.59 11.33 L14.73 17.20 L9.50 14.30 L4.27 17.20 L5.41 11.33 L1.04 7.25 L6.97 6.52 Z" fill="#f4b840" stroke="#f4b840" stroke-width="0.7" stroke-linejoin="round"/></svg>
<svg style="left:1442.2px;top:393.3px" width="19" height="19" viewBox="0 0 19 19"><path d="M9.50 1.10 L12.03 6.52 L17.96 7.25 L13.59 11.33 L14.73 17.20 L9.50 14.30 L4.27 17.20 L5.41 11.33 L1.04 7.25 L6.97 6.52 Z" fill="#f4b840" stroke="#f4b840" stroke-width="0.7" stroke-linejoin="round"/></svg>
<svg style="left:1465.2px;top:393.3px" width="19" height="19" viewBox="0 0 19 19"><path d="M9.50 1.10 L12.03 6.52 L17.96 7.25 L13.59 11.33 L14.73 17.20 L9.50 14.30 L4.27 17.20 L5.41 11.33 L1.04 7.25 L6.97 6.52 Z" fill="#cccccc" stroke="#b2b2b2" stroke-width="0.8" stroke-linejoin="round"/></svg>
<div class="t" style="left:7px;width:20px;text-align:center;top:436.55px;font-size:13.5px;color:#7c809c">6</div>
<svg style="left:39.9px;top:433.8px" width="19" height="19" viewBox="0 0 19 19"><path d="M9.50 1.30 L11.85 6.76 L17.77 7.31 L13.30 11.24 L14.61 17.04 L9.50 14.00 L4.39 17.04 L5.70 11.24 L1.23 7.31 L7.15 6.76 Z" fill="none" stroke="#a5a7c0" stroke-width="1.5" stroke-linejoin="round"/></svg>
<div class="t" style="left:92.30px;top:436.30px;font-size:14px;font-weight:normal;color:#2c3345;letter-spacing:0.022px;-webkit-text-stroke:0.2px #2c3345;">Berk Kumcuoğlu</div>
<div class="chip" style="left:292.25px;top:429px;width:65.75px;background:#dfe3ed"></div>
<div class="t" style="left:300.55px;top:436.30px;font-size:14px;font-weight:normal;color:#1b2036;letter-spacing:0.024px;-webkit-text-stroke:0.2px #1b2036;">İstanbul</div>
<div class="chip" style="left:362.25px;top:429px;width:60.75px;background:#eec6f3"></div>
<div class="t" style="left:370.55px;top:436.30px;font-size:14px;font-weight:normal;color:#1b2036;letter-spacing:-0.132px;-webkit-text-stroke:0.2px #1b2036;">Ankara</div>
<div class="chip" style="left:427.25px;top:429px;width:54.75px;background:#dedffa"></div>
<div class="t" style="left:435.55px;top:436.30px;font-size:14px;font-weight:normal;color:#1b2036;letter-spacing:-0.374px;-webkit-text-stroke:0.2px #1b2036;">Konya</div>
<div class="chip" style="left:486.25px;top:429px;width:46.75px;background:#b3dcea"></div>
<div class="t" style="left:494.55px;top:436.30px;font-size:14px;font-weight:normal;color:#1b2036;letter-spacing:0.044px;-webkit-text-stroke:0.2px #1b2036;">İzmir</div>
<div class="chip" style="left:537.25px;top:429px;width:58.75px;background:#f9dcc8"></div>
<div class="t" style="left:545.55px;top:436.30px;font-size:14px;font-weight:normal;color:#1b2036;letter-spacing:-0.083px;-webkit-text-stroke:0.2px #1b2036;">Isparta</div>
<div class="t" style="left:628.20px;top:436.30px;font-size:14px;font-weight:normal;color:#2c3345;letter-spacing:0.018px;-webkit-text-stroke:0.2px #2c3345;">C Sigorta</div>
<div class="t" style="left:828.20px;top:436.30px;font-size:14px;font-weight:normal;color:#2c3345;letter-spacing:0.014px;-webkit-text-stroke:0.2px #2c3345;">Manolya Sokak 7...</div>
<div class="chip" style="left:974px;top:429px;width:83px;background:#f6c794"></div>
<div class="t" style="left:982.50px;top:436.30px;font-size:14px;font-weight:normal;color:#1b2036;letter-spacing:0.060px;-webkit-text-stroke:0.2px #1b2036;">Reddedildi</div>
<div class="t" style="left:1174.20px;top:436.30px;font-size:14px;font-weight:normal;color:#2c3345;letter-spacing:-0.421px;-webkit-text-stroke:0.2px #2c3345;">HI12491248</div>
<svg style="left:1373.2px;top:434.3px" width="19" height="19" viewBox="0 0 19 19"><path d="M9.50 1.10 L12.03 6.52 L17.96 7.25 L13.59 11.33 L14.73 17.20 L9.50 14.30 L4.27 17.20 L5.41 11.33 L1.04 7.25 L6.97 6.52 Z" fill="#f4b840" stroke="#f4b840" stroke-width="0.7" stroke-linejoin="round"/></svg>
<svg style="left:1396.2px;top:434.3px" width="19" height="19" viewBox="0 0 19 19"><path d="M9.50 1.10 L12.03 6.52 L17.96 7.25 L13.59 11.33 L14.73 17.20 L9.50 14.30 L4.27 17.20 L5.41 11.33 L1.04 7.25 L6.97 6.52 Z" fill="#f4b840" stroke="#f4b840" stroke-width="0.7" stroke-linejoin="round"/></svg>
<svg style="left:1419.2px;top:434.3px" width="19" height="19" viewBox="0 0 19 19"><path d="M9.50 1.10 L12.03 6.52 L17.96 7.25 L13.59 11.33 L14.73 17.20 L9.50 14.30 L4.27 17.20 L5.41 11.33 L1.04 7.25 L6.97 6.52 Z" fill="#f4b840" stroke="#f4b840" stroke-width="0.7" stroke-linejoin="round"/></svg>
<svg style="left:1442.2px;top:434.3px" width="19" height="19" viewBox="0 0 19 19"><path d="M9.50 1.10 L12.03 6.52 L17.96 7.25 L13.59 11.33 L14.73 17.20 L9.50 14.30 L4.27 17.20 L5.41 11.33 L1.04 7.25 L6.97 6.52 Z" fill="#cccccc" stroke="#b2b2b2" stroke-width="0.8" stroke-linejoin="round"/></svg>
<svg style="left:1465.2px;top:434.3px" width="19" height="19" viewBox="0 0 19 19"><path d="M9.50 1.10 L12.03 6.52 L17.96 7.25 L13.59 11.33 L14.73 17.20 L9.50 14.30 L4.27 17.20 L5.41 11.33 L1.04 7.25 L6.97 6.52 Z" fill="#cccccc" stroke="#b2b2b2" stroke-width="0.8" stroke-linejoin="round"/></svg>
<div class="t" style="left:7px;width:20px;text-align:center;top:477.55px;font-size:13.5px;color:#7c809c">7</div>
<svg style="left:39.9px;top:474.8px" width="19" height="19" viewBox="0 0 19 19"><path d="M9.50 1.30 L11.85 6.76 L17.77 7.31 L13.30 11.24 L14.61 17.04 L9.50 14.00 L4.39 17.04 L5.70 11.24 L1.23 7.31 L7.15 6.76 Z" fill="none" stroke="#a5a7c0" stroke-width="1.5" stroke-linejoin="round"/></svg>
<div class="t" style="left:92.30px;top:477.30px;font-size:14px;font-weight:normal;color:#2c3345;letter-spacing:-0.223px;-webkit-text-stroke:0.2px #2c3345;">Batuhan Şanlısoy</div>
<div class="chip" style="left:292.25px;top:470px;width:58.75px;background:#f9dcc8"></div>
<div class="t" style="left:300.55px;top:477.30px;font-size:14px;font-weight:normal;color:#1b2036;letter-spacing:-0.083px;-webkit-text-stroke:0.2px #1b2036;">Isparta</div>
<div class="t" style="left:629.00px;top:477.30px;font-size:14px;font-weight:normal;color:#2c3345;letter-spacing:-0.236px;-webkit-text-stroke:0.2px #2c3345;">B Sigorta</div>
<div class="t" style="left:828.20px;top:477.30px;font-size:14px;font-weight:normal;color:#2c3345;letter-spacing:-0.069px;-webkit-text-stroke:0.2px #2c3345;">Ada Sokak 77 Kar...</div>
<div class="chip" style="left:974px;top:470px;width:103px;background:#f8d4ee"></div>
<div class="t" style="left:982.50px;top:477.30px;font-size:14px;font-weight:normal;color:#1b2036;letter-spacing:0.058px;-webkit-text-stroke:0.2px #1b2036;">Devam ediyor</div>
<div class="t" style="left:1174.20px;top:477.30px;font-size:14px;font-weight:normal;color:#2c3345;letter-spacing:-0.407px;-webkit-text-stroke:0.2px #2c3345;">DO128412842</div>
<svg style="left:1373.2px;top:475.3px" width="19" height="19" viewBox="0 0 19 19"><path d="M9.50 1.10 L12.03 6.52 L17.96 7.25 L13.59 11.33 L14.73 17.20 L9.50 14.30 L4.27 17.20 L5.41 11.33 L1.04 7.25 L6.97 6.52 Z" fill="#f4b840" stroke="#f4b840" stroke-width="0.7" stroke-linejoin="round"/></svg>
<svg style="left:1396.2px;top:475.3px" width="19" height="19" viewBox="0 0 19 19"><path d="M9.50 1.10 L12.03 6.52 L17.96 7.25 L13.59 11.33 L14.73 17.20 L9.50 14.30 L4.27 17.20 L5.41 11.33 L1.04 7.25 L6.97 6.52 Z" fill="#f4b840" stroke="#f4b840" stroke-width="0.7" stroke-linejoin="round"/></svg>
<svg style="left:1419.2px;top:475.3px" width="19" height="19" viewBox="0 0 19 19"><path d="M9.50 1.10 L12.03 6.52 L17.96 7.25 L13.59 11.33 L14.73 17.20 L9.50 14.30 L4.27 17.20 L5.41 11.33 L1.04 7.25 L6.97 6.52 Z" fill="#f4b840" stroke="#f4b840" stroke-width="0.7" stroke-linejoin="round"/></svg>
<svg style="left:1442.2px;top:475.3px" width="19" height="19" viewBox="0 0 19 19"><path d="M9.50 1.10 L12.03 6.52 L17.96 7.25 L13.59 11.33 L14.73 17.20 L9.50 14.30 L4.27 17.20 L5.41 11.33 L1.04 7.25 L6.97 6.52 Z" fill="#f4b840" stroke="#f4b840" stroke-width="0.7" stroke-linejoin="round"/></svg>
<svg style="left:1465.2px;top:475.3px" width="19" height="19" viewBox="0 0 19 19"><path d="M9.50 1.10 L12.03 6.52 L17.96 7.25 L13.59 11.33 L14.73 17.20 L9.50 14.30 L4.27 17.20 L5.41 11.33 L1.04 7.25 L6.97 6.52 Z" fill="#cccccc" stroke="#b2b2b2" stroke-width="0.8" stroke-linejoin="round"/></svg>
<div class="t" style="left:7px;width:20px;text-align:center;top:518.55px;font-size:13.5px;color:#7c809c">8</div>
<svg style="left:39.9px;top:515.8px" width="19" height="19" viewBox="0 0 19 19"><path d="M9.50 1.30 L11.85 6.76 L17.77 7.31 L13.30 11.24 L14.61 17.04 L9.50 14.00 L4.39 17.04 L5.70 11.24 L1.23 7.31 L7.15 6.76 Z" fill="none" stroke="#a5a7c0" stroke-width="1.5" stroke-linejoin="round"/></svg>
<div class="t" style="left:92.30px;top:518.30px;font-size:14px;font-weight:normal;color:#2c3345;letter-spacing:-0.002px;-webkit-text-stroke:0.2px #2c3345;">Utku Akışık</div>
<div class="chip" style="left:292.25px;top:511px;width:65.75px;background:#dfe3ed"></div>
<div class="t" style="left:300.55px;top:518.30px;font-size:14px;font-weight:normal;color:#1b2036;letter-spacing:0.024px;-webkit-text-stroke:0.2px #1b2036;">İstanbul</div>
<div class="chip" style="left:362.25px;top:511px;width:54.75px;background:#dedffa"></div>
<div class="t" style="left:370.55px;top:518.30px;font-size:14px;font-weight:normal;color:#1b2036;letter-spacing:-0.374px;-webkit-text-stroke:0.2px #1b2036;">Konya</div>
<div class="chip" style="left:421.25px;top:511px;width:60.75px;background:#eec6f3"></div>
<div class="t" style="left:429.55px;top:518.30px;font-size:14px;font-weight:normal;color:#1b2036;letter-spacing:-0.132px;-webkit-text-stroke:0.2px #1b2036;">Ankara</div>
<div class="t" style="left:628.20px;top:518.30px;font-size:14px;font-weight:normal;color:#2c3345;letter-spacing:0.018px;-webkit-text-stroke:0.2px #2c3345;">C Sigorta</div>
<div class="t" style="left:828.20px;top:518.30px;font-size:14px;font-weight:normal;color:#2c3345;letter-spacing:-0.128px;-webkit-text-stroke:0.2px #2c3345;">Ebru İş Hanı No 7...</div>
<div class="chip" style="left:974px;top:511px;width:80px;background:#f8d1c8"></div>
<div class="t" style="left:982.50px;top:518.30px;font-size:14px;font-weight:normal;color:#1b2036;letter-spacing:-0.077px;-webkit-text-stroke:0.2px #1b2036;">Onaylandı</div>
<div class="t" style="left:1174.20px;top:518.30px;font-size:14px;font-weight:normal;color:#2c3345;letter-spacing:-0.745px;-webkit-text-stroke:0.2px #2c3345;">DG124124</div>
<svg style="left:1373.2px;top:516.3px" width="19" height="19" viewBox="0 0 19 19"><path d="M9.50 1.10 L12.03 6.52 L17.96 7.25 L13.59 11.33 L14.73 17.20 L9.50 14.30 L4.27 17.20 L5.41 11.33 L1.04 7.25 L6.97 6.52 Z" fill="#f4b840" stroke="#f4b840" stroke-width="0.7" stroke-linejoin="round"/></svg>
<svg style="left:1396.2px;top:516.3px" width="19" height="19" viewBox="0 0 19 19"><path d="M9.50 1.10 L12.03 6.52 L17.96 7.25 L13.59 11.33 L14.73 17.20 L9.50 14.30 L4.27 17.20 L5.41 11.33 L1.04 7.25 L6.97 6.52 Z" fill="#f4b840" stroke="#f4b840" stroke-width="0.7" stroke-linejoin="round"/></svg>
<svg style="left:1419.2px;top:516.3px" width="19" height="19" viewBox="0 0 19 19"><path d="M9.50 1.10 L12.03 6.52 L17.96 7.25 L13.59 11.33 L14.73 17.20 L9.50 14.30 L4.27 17.20 L5.41 11.33 L1.04 7.25 L6.97 6.52 Z" fill="#f4b840" stroke="#f4b840" stroke-width="0.7" stroke-linejoin="round"/></svg>
<svg style="left:1442.2px;top:516.3px" width="19" height="19" viewBox="0 0 19 19"><path d="M9.50 1.10 L12.03 6.52 L17.96 7.25 L13.59 11.33 L14.73 17.20 L9.50 14.30 L4.27 17.20 L5.41 11.33 L1.04 7.25 L6.97 6.52 Z" fill="#f4b840" stroke="#f4b840" stroke-width="0.7" stroke-linejoin="round"/></svg>
<svg style="left:1465.2px;top:516.3px" width="19" height="19" viewBox="0 0 19 19"><path d="M9.50 1.10 L12.03 6.52 L17.96 7.25 L13.59 11.33 L14.73 17.20 L9.50 14.30 L4.27 17.20 L5.41 11.33 L1.04 7.25 L6.97 6.52 Z" fill="#f4b840" stroke="#f4b840" stroke-width="0.7" stroke-linejoin="round"/></svg>
</body>
</html>
